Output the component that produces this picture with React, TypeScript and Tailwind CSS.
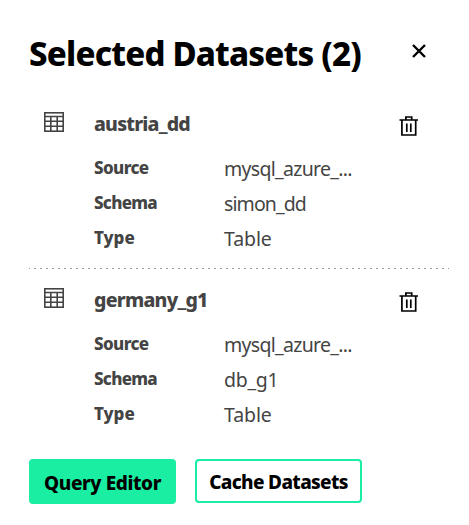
import React from "react";

type Dataset = { name: string; source: string; schema: string; type: string; nameClass: string; schemaClass: string };

const datasets: Dataset[] = [
  { name: "austria_dd", source: "mysql_azure_...", schema: "simon_dd", type: "Table", nameClass: "tracking-[-0.8px]", schemaClass: "tracking-[-0.9px]" },
  { name: "germany_g1", source: "mysql_azure_...", schema: "db_g1", type: "Table", nameClass: "tracking-[-0.75px]", schemaClass: "tracking-[-0.3px]" },
];

function TableIcon() {
  return (
    <svg width="20" height="20" viewBox="0 0 20 20" fill="none" stroke="#444444" strokeWidth="1.6">
      <rect x="0.8" y="0.8" width="18.4" height="18.4" />
      <path d="M1 4.5h18M1 9.3h18M1 14.2h18M6.8 4.5v15M13.2 4.5v15" />
    </svg>
  );
}

function TrashIcon() {
  return (
    <svg width="20" height="20" viewBox="0 0 20 20" fill="none" stroke="#000000" strokeWidth="1.7">
      <path d="M0.5 4h18.5M2.9 4v15h13.8V4M6.9 4V1h5.8v3M7.8 7.5v8.5M11.8 7.5v8.5" />
    </svg>
  );
}

function Field({ label, value, valueClass, labelClass }: { label: string; value: string; valueClass: string; labelClass: string }) {
  return (
    <div className="flex h-[35px]">
      <dt className={`w-[130px] pt-px text-[17px] leading-[30px] font-extrabold ${labelClass}`}>{label}</dt>
      <dd className={`pt-[1px] text-[19.5px] leading-[32px] whitespace-nowrap ${valueClass}`}>{value}</dd>
    </div>
  );
}

function DatasetRow({ data }: { data: Dataset }) {
  return (
    <section className="flex h-[175px] pl-[15px] text-[#444444]">
      <div className="w-[50px] pt-[19px]"><TableIcon /></div>
      <div className="w-[305px] pt-[16px]">
        <h2 className={`h-[43px] text-[19.5px] leading-[30px] font-extrabold ${data.nameClass}`}>{data.name}</h2>
        <dl>
          <Field label="Source" value={data.source} labelClass="tracking-[-0.6px]" valueClass="tracking-[-0.7px]" />
          <Field label="Schema" value={data.schema} labelClass="tracking-[-0.7px]" valueClass={data.schemaClass} />
          <Field label="Type" value={data.type} labelClass="tracking-[0px]" valueClass="tracking-[-0.1px]" />
        </dl>
      </div>
      <button aria-label="Remove dataset" className="h-5 w-5 mt-[23px]"><TrashIcon /></button>
    </section>
  );
}

export default function App() {
  return (
    <main className="h-[525px] w-[469px] overflow-hidden bg-white pl-[29px] pr-5 pt-[30px] font-['Noto_Sans',sans-serif]">
      <header className="flex h-[63px] justify-between">
        <h1 className="whitespace-nowrap pt-[2px] text-[33px] leading-[44px] font-extrabold tracking-[-0.8px] text-black">Selected Datasets (2)</h1>
        <button aria-label="Close" className="mr-[23px] mt-[14px] h-[14px] w-[14px]">
          <svg width="14" height="14" viewBox="0 0 14 14" fill="none" stroke="#000" strokeWidth="2.4"><path d="M1 1l12 12M13 1L1 13" /></svg>
        </button>
      </header>
      <DatasetRow data={datasets[0]} />
      <div className="h-px w-[420px] bg-[repeating-linear-gradient(90deg,#999_0_1px,transparent_1px_5px,#999_5px_6px)]" />
      <DatasetRow data={datasets[1]} />
      <footer className="mt-[15px] flex gap-[19px] text-black">
        <button className="h-[45px] w-[147px] whitespace-nowrap rounded-[4px] bg-[#1aeea2] pt-[3px] text-[19px] leading-[42px] font-extrabold tracking-[-0.4px]">Query Editor</button>
        <button className="h-[44px] w-[167px] whitespace-nowrap rounded-[4px] border-2 border-[#1aeea2] pt-[2px] text-[19px] leading-[38px] font-extrabold tracking-[-0.65px]">Cache Datasets</button>
      </footer>
    </main>
  );
}
